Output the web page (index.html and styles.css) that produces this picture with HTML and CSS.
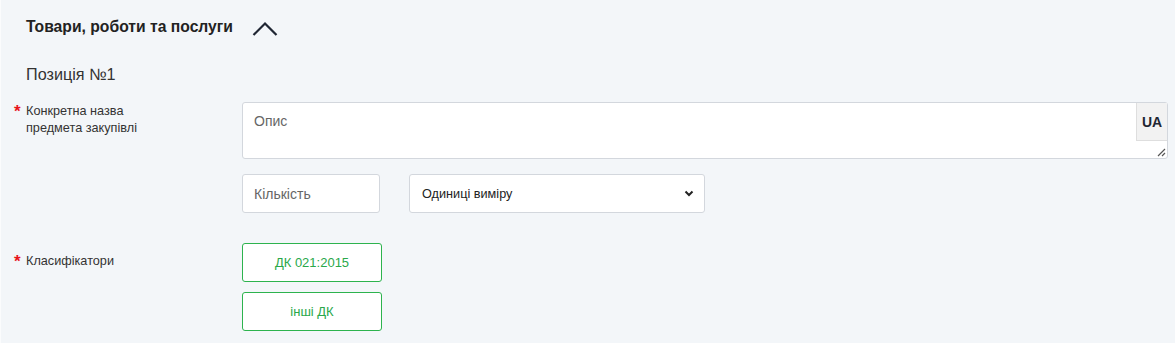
FILE: index.html
```html
<!DOCTYPE html>
<html lang="uk">
<head>
<meta charset="utf-8">
<link rel="stylesheet" href="styles.css">
</head>
<body>
<section class="section">
  <header class="section-head">
    <h2 class="section-title">Товари, роботи та послуги</h2>
    <svg class="chevron" width="26" height="16" viewBox="0 0 26 16"><path d="M1.5 14 L13 2.5 L24.5 14" fill="none" stroke="#1f2633" stroke-width="2.2"/></svg>
  </header>
  <div class="position-title">Позиція №1</div>

  <div class="form-row row-desc">
    <div class="label"><span class="req">*</span><span>Конкретна назва<br>предмета закупівлі</span></div>
    <div class="field">
      <div class="textarea-wrap">
        <div class="textarea">Опис</div>
        <div class="lang">UA</div>
        <svg class="resize" width="9" height="9" viewBox="0 0 9 9"><path d="M8 1 L1 8 M8 5 L5 8" stroke="#555" stroke-width="1.2" fill="none"/></svg>
      </div>
      <div class="qty-row">
        <div class="input qty">Кількість</div>
        <div class="input select"><span>Одиниці виміру</span>
          <svg width="10" height="7" viewBox="0 0 10 7"><path d="M1.5 1.5 L5 5 L8.5 1.5" fill="none" stroke="#222" stroke-width="2"/></svg>
        </div>
      </div>
    </div>
  </div>

  <div class="form-row row-class">
    <div class="label label-class"><span class="req">*</span><span>Класифікатори</span></div>
    <div class="field buttons">
      <button class="btn">ДК 021:2015</button>
      <button class="btn">інші ДК</button>
    </div>
  </div>
</section>
</body>
</html>
```

FILE: styles.css
```css
* { box-sizing: border-box; }
html, body { margin: 0; padding: 0; }
body {
  background: #f3f6f9;
  font-family: "Liberation Sans", Arial, sans-serif;
  color: #222;
  width: 1175px;
  height: 343px;
  overflow: hidden;
  box-shadow: inset 1px 0 0 #fbfcfd;
}
.section { padding: 0 0 0 26px; }
.section-head {
  display: flex;
  align-items: center;
  gap: 19px;
  height: 52px;
  padding-top: 2px;
}
.section-title {
  margin: 0;
  font-size: 15.7px;
  font-weight: 700;
  color: #222;
}
.chevron { margin-top: 4px; }
.position-title {
  font-size: 16.2px;
  color: #333;
  line-height: 20px;
  margin-top: 12px;
}
.form-row {
  display: flex;
  margin-left: -12px;
}
.row-desc { margin-top: 18px; }
.label {
  width: 228px;
  flex: none;
  display: flex;
  font-size: 12.7px;
  line-height: 17px;
  color: #333;
  padding-top: 1px;
}
.req {
  color: #e8141b;
  width: 12px;
  flex: none;
  font-size: 17px;
  font-weight: 700;
  line-height: 17px;
}
.field { flex: none; }
.textarea-wrap {
  position: relative;
  width: 926px;
  height: 57px;
  background: #fff;
  border: 1px solid #d3d7dd;
  border-radius: 3px;
}
.textarea {
  padding: 10px 0 0 11px;
  font-size: 14px;
  color: #666;
}
.lang {
  position: absolute;
  top: 0;
  right: 0;
  width: 31px;
  height: 38px;
  background: #f2f2f2;
  border-left: 1px solid #dedede;
  border-bottom: 1px solid #dedede;
  display: flex;
  align-items: center;
  justify-content: center;
  font-size: 14px;
  font-weight: 700;
  color: #1f2633;
}
.resize { position: absolute; right: 1px; bottom: 1px; }
.qty-row {
  display: flex;
  gap: 29px;
  margin-top: 15px;
}
.input {
  height: 39px;
  background: #fff;
  border: 1px solid #d3d7dd;
  border-radius: 3px;
  font-size: 14px;
  display: flex;
  align-items: center;
}
.qty { width: 138px; padding-left: 11px; color: #666; }
.select {
  width: 296px;
  padding: 0 10px 0 12px;
  justify-content: space-between;
  font-size: 12.7px;
  color: #222;
}
.row-class { margin-top: 30px; }
.label-class { padding-top: 10px; }
.buttons { display: flex; flex-direction: column; gap: 10px; }
.btn {
  width: 140px;
  height: 39px;
  background: #fff;
  border: 1px solid #2db34e;
  border-radius: 3px;
  color: #2aa84a;
  font-family: inherit;
  font-size: 13px;
  padding: 0;
  cursor: pointer;
}
```
